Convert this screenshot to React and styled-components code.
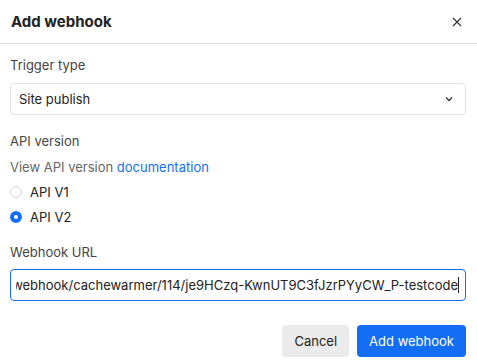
import React from 'react';
import styled, { createGlobalStyle } from 'styled-components';

const GlobalStyle = createGlobalStyle`
    body {
        margin: 0;
        background: #fff;
        font-family: Inter, 'Noto Sans', sans-serif;
        color: #1f1f1f;
    }
`;

const Dialog = styled.div`
    width: 477px;
    height: 364px;
    display: flex;
    flex-direction: column;
    background: #fff;
`;

const Header = styled.div`
    display: flex;
    justify-content: space-between;
    align-items: center;
    height: 43px;
    padding: 0 14px 0 11px;
    border-bottom: 1px solid #dcdcdc;
`;

const Title = styled.h2`
    margin: 0;
    font-size: 15px;
    font-weight: 700;
    color: #222;
`;

const CloseButton = styled.button`
    border: none;
    background: none;
    padding: 0;
    width: 12px;
    height: 12px;
    display: flex;
    color: #333;
`;

const Body = styled.div`
    display: flex;
    flex-direction: column;
    padding: 13px 11px 0 10px;
`;

const Label = styled.div`
    font-size: 13px;
    color: #444;
    line-height: 16px;
    margin-top: ${p => p.top || 0}px;
    margin-bottom: ${p => p.gap || 10}px;
`;

const Select = styled.div`
    display: flex;
    justify-content: space-between;
    align-items: center;
    height: 30px;
    padding: 0 12px 0 8px;
    border: 1px solid #e3e3e3;
    border-radius: 4px;
    font-size: 13px;
    color: #222;
    margin-bottom: 18px;
`;

const Hint = styled.div`
    font-size: 13px;
    color: #666;
    line-height: 16px;
    margin-bottom: 9px;
`;

const Link = styled.a`
    color: #146ef5;
    text-decoration: none;
`;

const RadioRow = styled.label`
    display: flex;
    align-items: center;
    gap: 8px;
    height: 16px;
    margin-bottom: 9px;
    font-size: 13px;
    color: #222;
`;

const RadioDot = styled.span`
    box-sizing: border-box;
    width: 12px;
    height: 12px;
    border-radius: 50%;
    border: ${p => (p.checked ? '4px solid #146ef5' : '1px solid #d4d4d4')};
    background: #fff;
`;

const UrlField = styled.div`
    display: flex;
    align-items: center;
    height: 30px;
    padding: 0 6px 0 5px;
    border: 1px solid #146ef5;
    border-radius: 4px;
    font-size: 13px;
    color: #222;
`;

const UrlText = styled.div`
    flex: 1;
    display: flex;
    justify-content: flex-end;
    align-items: center;
    overflow: hidden;
    white-space: nowrap;
`;

const Caret = styled.span`
    display: inline-block;
    width: 1px;
    height: 16px;
    background: #222;
    flex-shrink: 0;
`;

const Footer = styled.div`
    display: flex;
    justify-content: flex-end;
    gap: 8px;
    padding: 24px 11px 0 0;
`;

const Button = styled.button`
    height: 32px;
    padding: 0 12px;
    border: none;
    border-radius: 4px;
    font-family: inherit;
    font-size: 13px;
    color: ${p => (p.primary ? '#fff' : '#222')};
    background: ${p => (p.primary ? '#146ef5' : '#ebebeb')};
`;

function App() {
    return (
        <>
            <GlobalStyle />
            <Dialog>
                <Header>
                    <Title>Add webhook</Title>
                    <CloseButton>
                        <svg width="12" height="12" viewBox="0 0 12 12" fill="none">
                            <path d="M2 2l8 8M10 2l-8 8" stroke="currentColor" strokeWidth="1.2" />
                        </svg>
                    </CloseButton>
                </Header>
                <Body>
                    <Label>Trigger type</Label>
                    <Select>
                        <span>Site publish</span>
                        <svg width="8" height="6" viewBox="0 0 8 6" fill="none">
                            <path d="M1 1.5l3 3 3-3" stroke="#333" strokeWidth="1.3" />
                        </svg>
                    </Select>
                    <Label>API version</Label>
                    <Hint>
                        View API version <Link href="#">documentation</Link>
                    </Hint>
                    <RadioRow>
                        <RadioDot />
                        API V1
                    </RadioRow>
                    <RadioRow>
                        <RadioDot checked />
                        API V2
                    </RadioRow>
                    <Label top={10} gap={9}>Webhook URL</Label>
                    <UrlField>
                        <UrlText>
                            <span>webhook/cachewarmer/114/je9HCzq-KwnUT9C3fJzrPYyCW_P-testcode</span>
                            <Caret />
                        </UrlText>
                    </UrlField>
                </Body>
                <Footer>
                    <Button>Cancel</Button>
                    <Button primary>Add webhook</Button>
                </Footer>
            </Dialog>
        </>
    );
}

export default App;
